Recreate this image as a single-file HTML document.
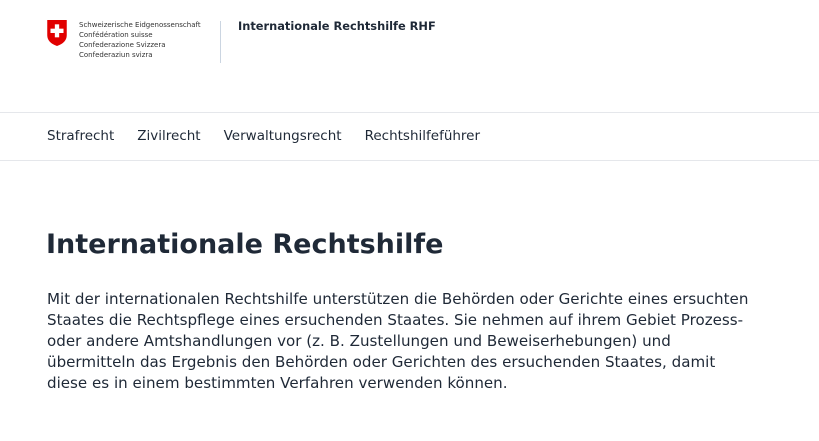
<!DOCTYPE html>
<html><head><meta charset="utf-8"><style>
body{margin:0;width:819px;height:441px;background:#fff;font-family:"DejaVu Sans","Liberation Sans",sans-serif;color:#1f2937;overflow:hidden;position:relative}
.abs{position:absolute}
.logo div{font-size:7px;line-height:10px;color:#333;white-space:nowrap}
</style></head><body>
<svg class="abs" style="left:47px;top:20px" width="20" height="26" viewBox="0 0 18 24"><path d="M0 0H18V14Q18 21 9 24Q0 21 0 14Z" fill="#e10000"/><rect x="7" y="4" width="4" height="12" fill="#fff"/><rect x="3" y="8" width="12" height="4" fill="#fff"/></svg>
<div class="abs logo" style="left:79px;top:20px"><div>Schweizerische Eidgenossenschaft</div><div>Confédération suisse</div><div>Confederazione Svizzera</div><div>Confederaziun svizra</div></div>
<div class="abs" style="left:220px;top:21px;width:1px;height:42px;background:#cbd5e1"></div>
<div class="abs" style="left:238px;top:19px;font-size:11.4px;font-weight:bold;color:#1f2937">Internationale Rechtshilfe RHF</div>
<div class="abs" style="left:0;top:112px;width:819px;height:1px;background:#e5e7eb"></div>
<div class="abs" style="left:0;top:160px;width:819px;height:1px;background:#e5e7eb"></div>
<div class="abs" style="left:47px;top:128px;font-size:13.5px;color:#1f2937;white-space:nowrap">Strafrecht<span style="margin-left:23px">Zivilrecht</span><span style="margin-left:23px">Verwaltungsrecht</span><span style="margin-left:23px">Rechtshilfeführer</span></div>
<div class="abs" style="left:46px;top:229px;font-size:27px;font-weight:bold;color:#1f2937">Internationale Rechtshilfe</div>
<div class="abs" style="left:47px;top:289px;white-space:nowrap;font-size:15.1px;line-height:21px;color:#1f2937">Mit der internationalen Rechtshilfe unterstützen die Behörden oder Gerichte eines ersuchten<br>Staates die Rechtspflege eines ersuchenden Staates. Sie nehmen auf ihrem Gebiet Prozess-<br>oder andere Amtshandlungen vor (z. B. Zustellungen und Beweiserhebungen) und<br>übermitteln das Ergebnis den Behörden oder Gerichten des ersuchenden Staates, damit<br>diese es in einem bestimmten Verfahren verwenden können.</div>
</body></html>
